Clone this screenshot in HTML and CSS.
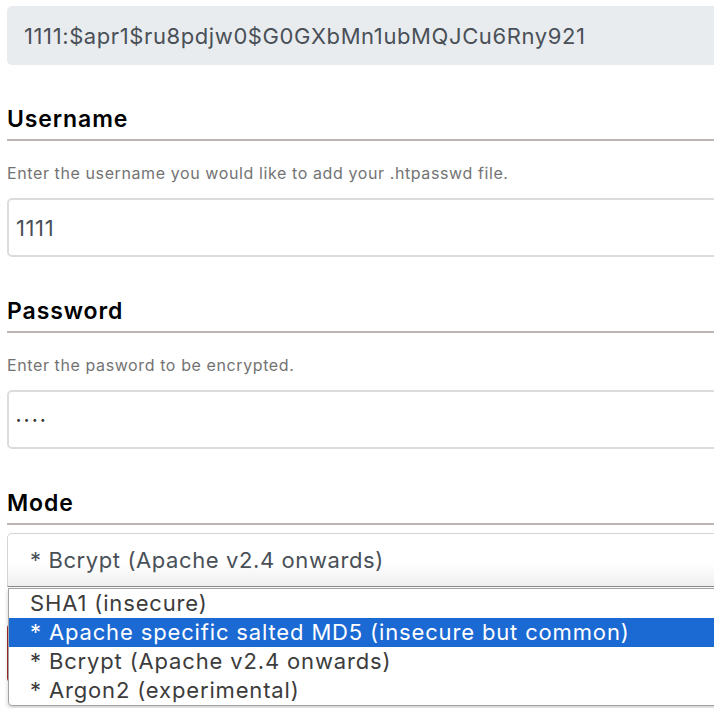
FILE: index.html
```html
<!DOCTYPE html>
<html lang="en">
<head>
    <meta charset="UTF-8">
    <meta name="viewport" content="width=device-width, initial-scale=1.0">
    <title>Htpasswd Generator</title>
    <link rel="stylesheet" href="styles.css">
</head>
<body>
    <div class="page">
        <div class="result">1111:$apr1$ru8pdjw0$G0GXbMn1ubMQJCu6Rny921</div>

        <div class="field">
            <h2 class="field-title">Username</h2>
            <p class="field-help">Enter the username you would like to add your .htpasswd file.</p>
            <input class="field-input" type="text" value="1111">
        </div>

        <div class="field">
            <h2 class="field-title">Password</h2>
            <p class="field-help">Enter the pasword to be encrypted.</p>
            <input class="field-input password" type="password" value="1111">
        </div>

        <div class="field">
            <h2 class="field-title">Mode</h2>
            <div class="select-wrap">
                <div class="select">* Bcrypt (Apache v2.4 onwards)</div>
                <!-- open dropdown list -->
                <ul class="select-menu">
                    <li>SHA1 (insecure)</li>
                    <li class="active">* Apache specific salted MD5 (insecure but common)</li>
                    <li>* Bcrypt (Apache v2.4 onwards)</li>
                    <li>* Argon2 (experimental)</li>
                </ul>
            </div>
            <button class="generate"></button>
        </div>
    </div>
</body>
</html>
```

FILE: styles.css
```css
html {
    overflow: hidden;
}

body {
    margin: 0;
    background-color: #fff;
    font-family: Inter, "DejaVu Sans", sans-serif;
}

.page {
    width: 760px;
    min-height: 760px;
    padding: 6px 0 0 7px;
}

.result {
    height: 59px;
    display: flex;
    align-items: center;
    padding-left: 17px;
    background-color: #e9ecef;
    border-radius: 5px;
    color: #495057;
    font-size: 22px;
    letter-spacing: 0.6px;
}

.field {
    margin-top: 36px;
}

.field-title {
    margin: 0;
    padding: 3px 0 5px 0;
    border-bottom: 2px solid #bcb7b4;
    font-size: 23px;
    line-height: 30px;
    font-weight: 600;
    color: #000;
    letter-spacing: 0.9px;
}

.field-help {
    margin: 22px 0 15px 0;
    font-size: 16px;
    line-height: 20px;
    color: #737373;
    letter-spacing: 0.6px;
}

.field-input {
    display: block;
    box-sizing: border-box;
    width: 100%;
    height: 59px;
    padding: 0 7px;
    border: 2px solid #dcdcdc;
    border-radius: 5px;
    font-family: inherit;
    font-size: 22px;
    color: #495057;
    letter-spacing: 0.6px;
    outline: none;
}

.field-input.password {
    font-size: 9px;
    letter-spacing: 3px;
    color: #333;
}

.select-wrap {
    position: relative;
    margin-top: 8px;
}

.select {
    box-sizing: border-box;
    height: 54px;
    display: flex;
    align-items: center;
    padding-left: 22px;
    border: 1px solid #d3d3d8;
    border-bottom-color: #8c8c8c;
    border-radius: 5px 5px 0 0;
    background: linear-gradient(#fff 55%, #efefef);
    font-size: 22px;
    color: #495057;
    letter-spacing: 0.6px;
}

.select-menu {
    position: absolute;
    top: 55px;
    left: 1px;
    right: 0;
    z-index: 2;
    margin: 0;
    padding: 0;
    list-style: none;
    background-color: #fff;
    border: 1px solid #a3a3a3;
    border-radius: 0 0 4px 4px;
    box-shadow: 0 2px 4px rgba(0, 0, 0, 0.2);
}

.select-menu li {
    height: 29px;
    line-height: 29px;
    padding-left: 21px;
    font-size: 22px;
    color: #3c3c3c;
    letter-spacing: 0.85px;
    white-space: nowrap;
}

.select-menu li.active {
    background-color: #1b69d3;
    color: #fff;
}

.generate {
    display: block;
    width: 220px;
    height: 60px;
    margin-top: 36px;
    background-color: #9e2a2a;
    border: none;
    border-radius: 5px;
}
```
